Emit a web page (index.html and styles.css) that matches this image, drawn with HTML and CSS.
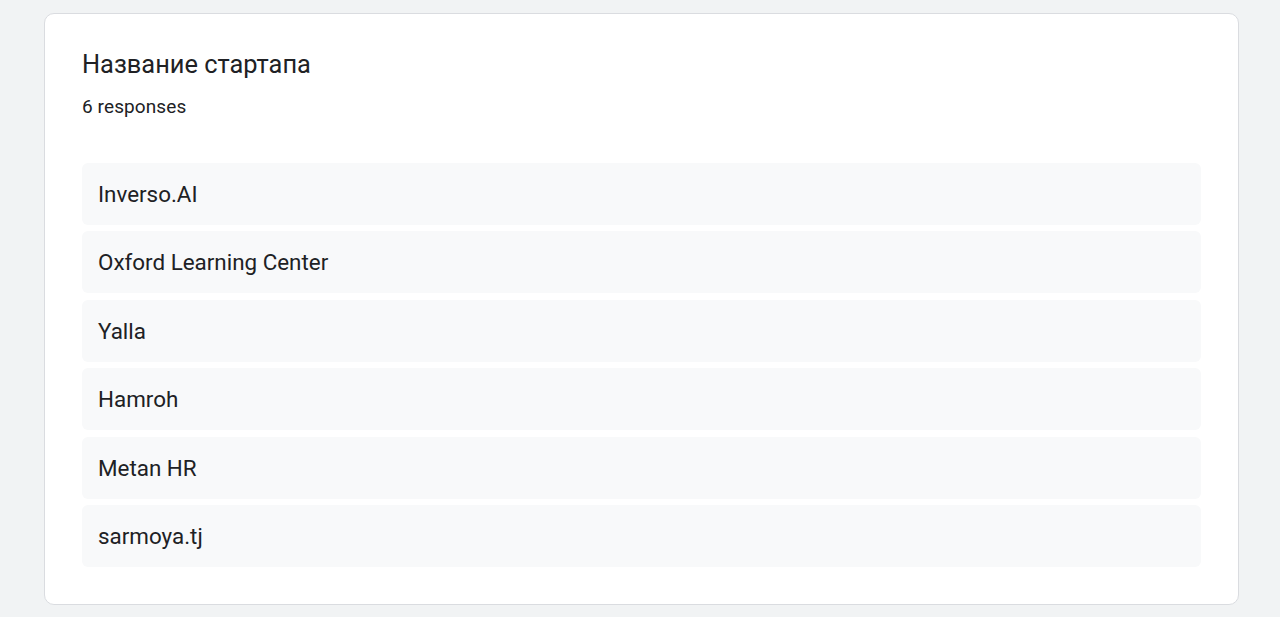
FILE: index.html
```html
<!DOCTYPE html>
<html>
<head>
<meta charset="utf-8">
<link rel="stylesheet" href="styles.css">
</head>
<body>
<div class="page">
  <div class="card">
    <div class="title">Название стартапа</div>
    <div class="count">6 responses</div>
    <div class="list">
      <div class="row">Inverso.AI</div>
      <div class="row">Oxford Learning Center</div>
      <div class="row">Yalla</div>
      <div class="row">Hamroh</div>
      <div class="row">Metan HR</div>
      <div class="row">sarmoya.tj</div>
    </div>
  </div>
</div>
</body>
</html>
```
FILE: styles.css
```css
html, body {
  margin: 0;
  padding: 0;
  background: #f1f3f4;
  font-family: Roboto, "Noto Sans", sans-serif;
  color: #202124;
}
.page {
  padding: 13px 41px 0 44px;
}
.card {
  background: #fff;
  border: 1px solid #dadce0;
  border-radius: 10px;
  padding: 33px 37px 37px 37px;
  height: 592px;
  box-sizing: border-box;
}
.title {
  font-size: 25.4px;
  line-height: 34px;
  font-weight: 400;
}
.count {
  font-size: 19px;
  line-height: 24px;
  margin-top: 14px;
  letter-spacing: 0.1px;
}
.list {
  margin-top: 44px;
  display: flex;
  flex-direction: column;
  gap: 6.4px;
}
.row {
  background: #f8f9fa;
  border-radius: 6px;
  height: 62px;
  display: flex;
  align-items: center;
  padding-left: 16px;
  font-size: 22.4px;
}
```
